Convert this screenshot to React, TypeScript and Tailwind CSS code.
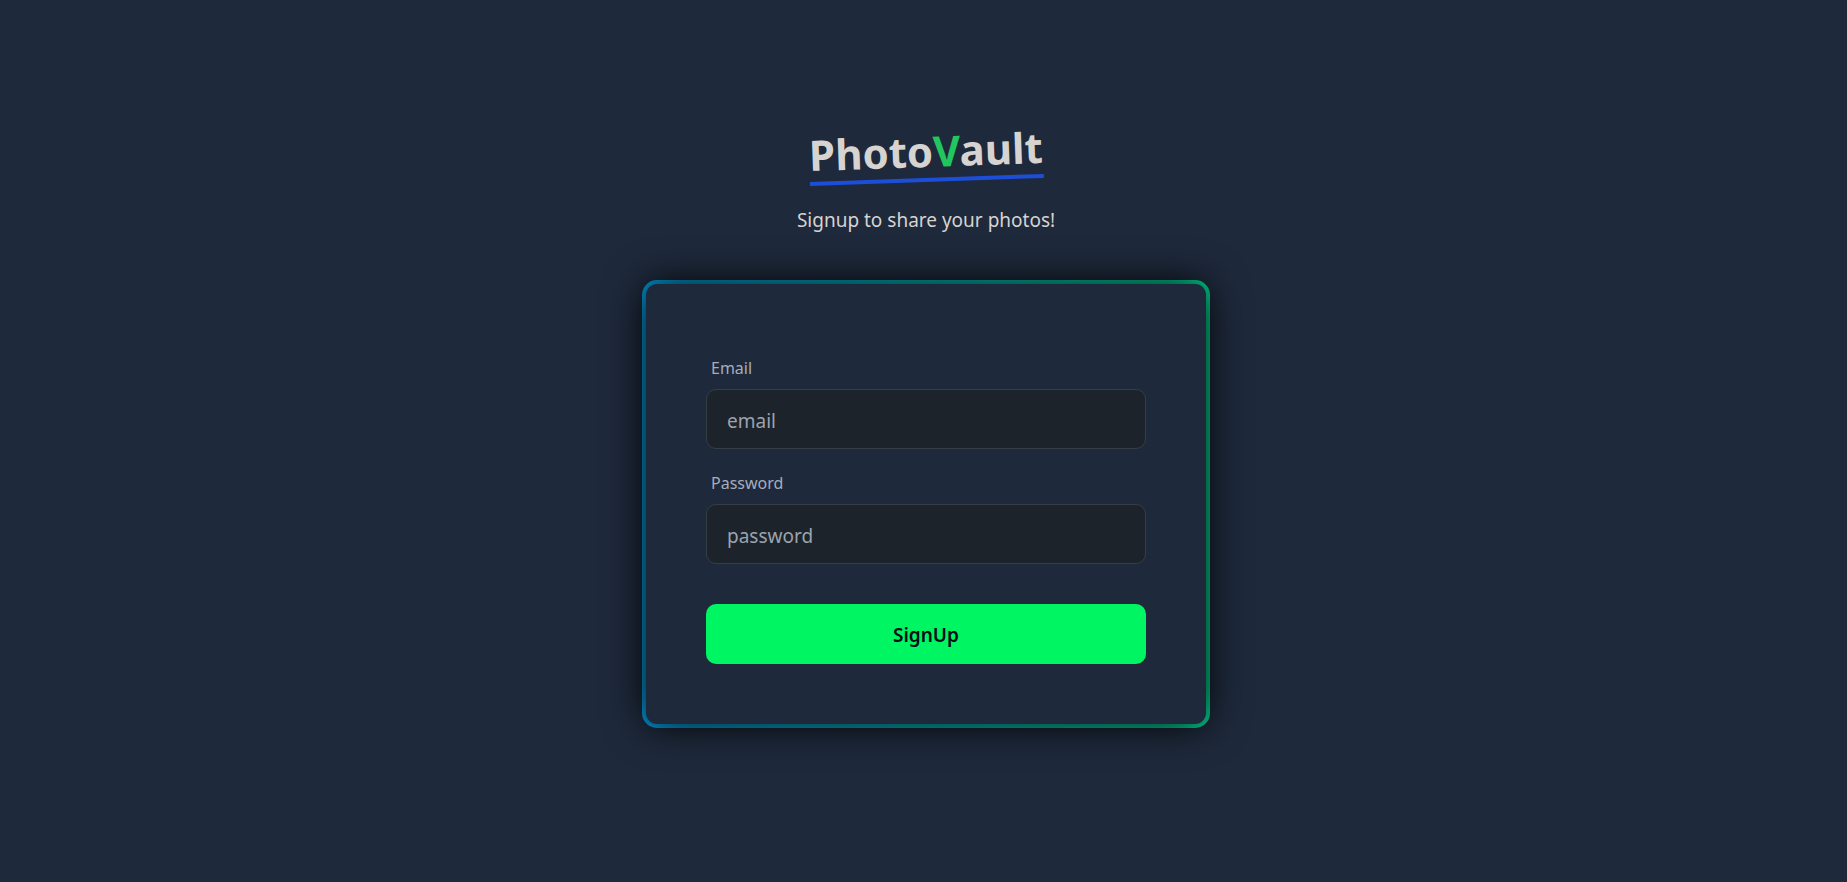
import React from "react";

type FieldProps = { id: string; label: string; type: string; placeholder: string };

function Field({ id, label, type, placeholder }: FieldProps) {
  return (
    <div className="flex flex-col">
      <label htmlFor={id} className="px-[5px] pt-[12px] pb-[8px] text-[16px] leading-[25px] text-[#a6adbb]">
        {label}
      </label>
      <input
        id={id}
        type={type}
        placeholder={placeholder}
        className="h-[60px] w-full rounded-[10px] border border-[#373d44] bg-[#1d232a] px-5 pt-[3px] text-[19px] text-[#a6adbb] outline-none placeholder:text-[#9ca3af]"
      />
    </div>
  );
}

export default function App() {
  return (
    <main className="flex min-h-screen flex-col items-center bg-[#1e293b] pt-[124px] pl-[5px] font-['Noto_Sans',sans-serif]">
      <h1 className="-rotate-2 border-b-4 border-[#1d4ed8] text-[42px] leading-[54px] font-bold text-[#d6d3d1]">
        Photo<span className="text-[#22c55e]">V</span>ault
      </h1>
      <p className="mt-[23px] text-[19px] leading-[30px] text-[#d6d3d1]">Signup to share your photos!</p>
      <section className="mt-[45px] w-full max-w-[568px] rounded-[15px] bg-linear-to-r from-[#0099dd] to-[#00d68f] p-1">
        <form
          className="flex flex-col rounded-[11px] bg-[#1e293b] p-[60px] shadow-[0_0_40px_#000]"
          onSubmit={(e) => e.preventDefault()}
        >
          <div className="flex flex-col gap-[10px]">
            <Field id="email" label="Email" type="email" placeholder="email" />
            <Field id="password" label="Password" type="password" placeholder="password" />
          </div>
          <button
            type="submit"
            className="mt-10 h-[60px] w-full rounded-[10px] bg-[#00f562] pt-[3px] text-[19px] font-semibold text-[#000d14]"
          >
            SignUp
          </button>
        </form>
      </section>
    </main>
  );
}
